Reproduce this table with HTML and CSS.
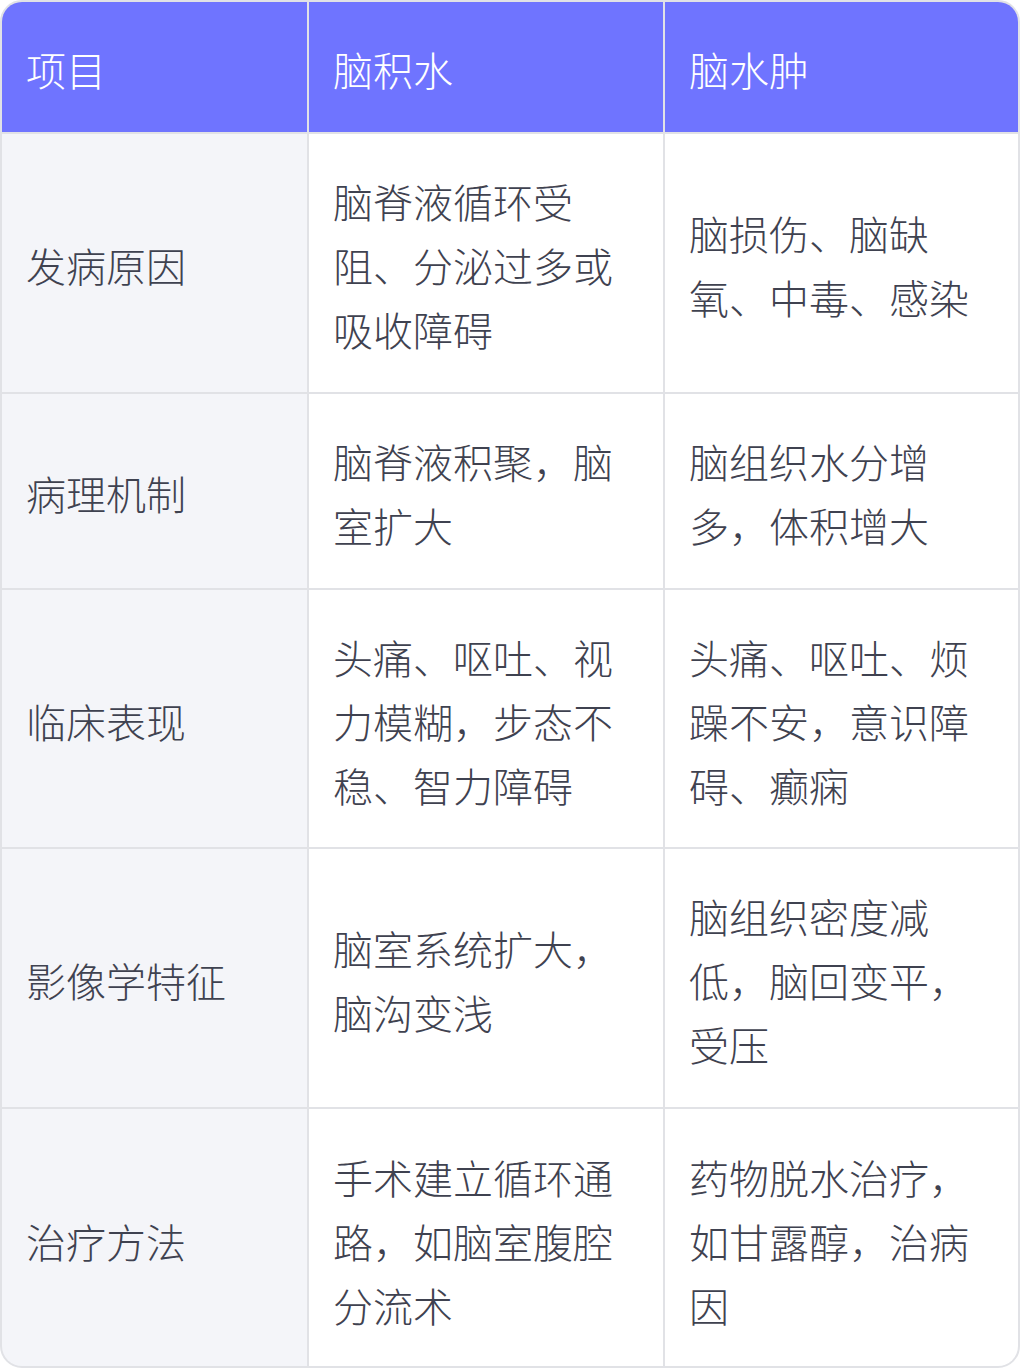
FILE: index.html
```html
<!DOCTYPE html>
<html lang="zh-CN">
<head>
<meta charset="utf-8">
<link rel="stylesheet" href="styles.css">
</head>
<body>
<div class="table">
  <div class="cell head">项目</div>
  <div class="cell head">脑积水</div>
  <div class="cell head">脑水肿</div>

  <div class="cell label">发病原因</div>
  <div class="cell">脑脊液循环受阻、分泌过多或吸收障碍</div>
  <div class="cell">脑损伤、脑缺氧、中毒、感染</div>

  <div class="cell label">病理机制</div>
  <div class="cell">脑脊液积聚，脑室扩大</div>
  <div class="cell">脑组织水分增多，体积增大</div>

  <div class="cell label">临床表现</div>
  <div class="cell">头痛、呕吐、视力模糊，步态不稳、智力障碍</div>
  <div class="cell">头痛、呕吐、烦躁不安，意识障碍、癫痫</div>

  <div class="cell label">影像学特征</div>
  <div class="cell">脑室系统扩大，脑沟变浅</div>
  <div class="cell">脑组织密度减低，脑回变平，受压</div>

  <div class="cell label">治疗方法</div>
  <div class="cell">手术建立循环通路，如脑室腹腔分流术</div>
  <div class="cell">药物脱水治疗，如甘露醇，治病因</div>
</div>
</body>
</html>
```
FILE: styles.css
```css
html, body {
  margin: 0;
  padding: 0;
  background: #ffffff;
}
.table {
  width: 1020px;
  height: 1368px;
  box-sizing: border-box;
  display: grid;
  grid-template-columns: 305px 354px 353px;
  grid-template-rows: 130px 258px 194px 257px 258px 259px;
  gap: 2px;
  border: 2px solid #e1e2e6;
  border-radius: 22px;
  overflow: hidden;
  background: #e1e2e6;
  font-family: "Noto Sans CJK SC", "Noto Sans", sans-serif;
  font-size: 40px;
  font-weight: 300;
  line-height: 64px;
  color: #3f4250;
}
.cell {
  background: #ffffff;
  padding: 4px 24px 0 24px;
  display: flex;
  align-items: center;
}
.cell.head {
  background: #6f74ff;
  color: #ffffff;
}
.cell.label {
  background: #f4f5f9;
}
```
